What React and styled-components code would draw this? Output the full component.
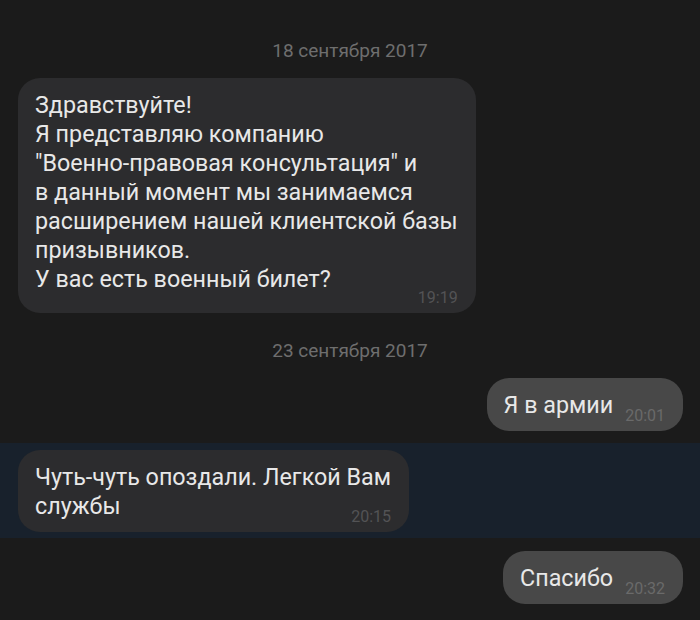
import { createGlobalStyle, styled } from "styled-components";

const GlobalStyle = createGlobalStyle`
    html, body {
        margin: 0;
        padding: 0;
        background: #1b1b1b;
        height: 100%;
    }

    body {
        font-family: Roboto, "Noto Sans", sans-serif;
        color: #e8e8e8;
    }
`;

const Page = styled.div`
    display: flex;
    flex-direction: column;
    min-height: 620px;
    padding-top: 39px;
    box-sizing: border-box;
    background: #1b1b1b;
`;

const DateLabel = styled.div`
    height: 24px;
    line-height: 24px;
    font-size: 19px;
    text-align: center;
    color: #6e6e6e;
    margin-top: ${(p) => p.$top || 0}px;
    margin-bottom: 15px;
`;

const Row = styled.div`
    display: flex;
    justify-content: ${(p) => (p.$out ? "flex-end" : "flex-start")};
    padding: ${(p) => (p.$highlight ? "7px 17px 6px 18px" : "0 17px 0 18px")};
    margin-top: ${(p) => p.$top || 0}px;
    background: ${(p) => (p.$highlight ? "#18212c" : "transparent")};
`;

const Bubble = styled.div`
    display: inline-block;
    padding: 13px 18px 7px 17px;
    border-radius: 22px;
    background: ${(p) => (p.$out ? "#484848" : "#2c2c2e")};
    font-size: 23.3px;
    line-height: 29px;
    white-space: pre-line;
    color: #e8e8e8;
`;

const Time = styled.span`
    float: right;
    margin: ${(p) => p.$drop || 17}px 0 0 12px;
    font-size: 16px;
    line-height: 16px;
    white-space: nowrap;
    color: ${(p) => (p.$out ? "#6a6a6a" : "#535355")};
`;

const messages = [
    { type: "date", text: "18 сентября 2017" },
    {
        type: "msg",
        text:
            "Здравствуйте!\nЯ представляю компанию\n\"Военно-правовая консультация\" и\nв данный момент мы занимаемся\nрасширением нашей клиентской базы\nпризывников.\nУ вас есть военный билет?",
        time: "19:19",
        drop: 25,
    },
    { type: "date", text: "23 сентября 2017", top: 26 },
    { type: "msg", out: true, text: "Я в армии", time: "20:01" },
    {
        type: "msg",
        text: "Чуть-чуть опоздали. Легкой Вам\nслужбы",
        time: "20:15",
        highlight: true,
        top: 12,
    },
    { type: "msg", out: true, text: "Спасибо", time: "20:32", top: 13 },
];

const App = () => {
    return (
        <>
            <GlobalStyle />
            <Page>
                {messages.map((m, i) =>
                    m.type === "date" ? (
                        <DateLabel key={i} $top={m.top}>
                            {m.text}
                        </DateLabel>
                    ) : (
                        <Row key={i} $out={m.out} $highlight={m.highlight} $top={m.top}>
                            <Bubble $out={m.out}>
                                {m.text}
                                <Time $out={m.out} $drop={m.drop}>
                                    {m.time}
                                </Time>
                            </Bubble>
                        </Row>
                    )
                )}
            </Page>
        </>
    );
};

export default App;
